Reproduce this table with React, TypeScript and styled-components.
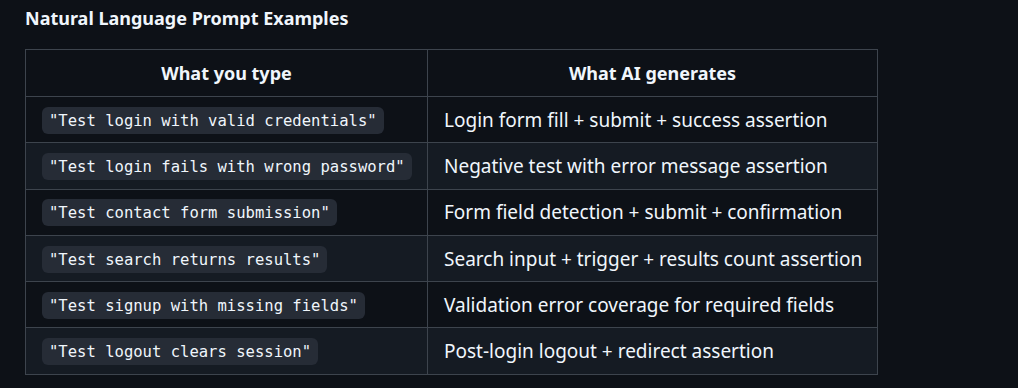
import styled, { createGlobalStyle } from 'styled-components';

const GlobalStyle = createGlobalStyle`
  html, body {
    margin: 0;
    padding: 0;
    background: #0d1117;
  }
  body {
    color: #f0f6fc;
    font-family: "Noto Sans", "Open Sans", sans-serif;
  }
`;

const Page = styled.div`
  width: 1018px;
  height: 388px;
  padding: 5px 25px 0;
  box-sizing: border-box;
  background: #0d1117;
  overflow: hidden;
`;

const Heading = styled.h3`
  margin: 0 0 18px;
  font-size: 18px;
  line-height: 26px;
  font-weight: 700;
  color: #f0f6fc;
`;

const Table = styled.table`
  border-collapse: collapse;
  border-spacing: 0;
  table-layout: fixed;
  width: 851px;
`;

const Row = styled.tr<{ striped?: boolean }>`
  background: ${({ striped }) => (striped ? '#151b23' : '#0d1117')};
`;

const HeadCell = styled.th<{ width: number }>`
  width: ${({ width }) => width}px;
  height: 46px;
  padding: 0 16px;
  border: 1px solid #3d444d;
  font-size: 18px;
  font-weight: 700;
  text-align: center;
  vertical-align: middle;
`;

const Cell = styled.td`
  height: 45.3px;
  padding: 0 16px;
  border: 1px solid #3d444d;
  font-size: 19px;
  text-align: left;
  vertical-align: middle;
  white-space: nowrap;
`;

const Code = styled.code`
  display: inline-block;
  padding: 3px 7px 2px;
  border-radius: 6px;
  background: #262c36;
  font-family: "DejaVu Sans Mono", "Liberation Mono", monospace;
  font-size: 15.55px;
  line-height: 22px;
  color: #f0f6fc;
`;

interface Example {
  prompt: string;
  result: string;
}

const examples: Example[] = [
  { prompt: '"Test login with valid credentials"', result: 'Login form fill + submit + success assertion' },
  { prompt: '"Test login fails with wrong password"', result: 'Negative test with error message assertion' },
  { prompt: '"Test contact form submission"', result: 'Form field detection + submit + confirmation' },
  { prompt: '"Test search returns results"', result: 'Search input + trigger + results count assertion' },
  { prompt: '"Test signup with missing fields"', result: 'Validation error coverage for required fields' },
  { prompt: '"Test logout clears session"', result: 'Post-login logout + redirect assertion' },
];

export default function App() {
  return (
    <Page>
      <GlobalStyle />
      <Heading>Natural Language Prompt Examples</Heading>
      <Table>
        <thead>
          <Row>
            <HeadCell width={369}>What you type</HeadCell>
            <HeadCell width={417}>What AI generates</HeadCell>
          </Row>
        </thead>
        <tbody>
          {examples.map((ex, i) => (
            <Row key={ex.prompt} striped={i % 2 === 1}>
              <Cell>
                <Code>{ex.prompt}</Code>
              </Cell>
              <Cell>{ex.result}</Cell>
            </Row>
          ))}
        </tbody>
      </Table>
    </Page>
  );
}
